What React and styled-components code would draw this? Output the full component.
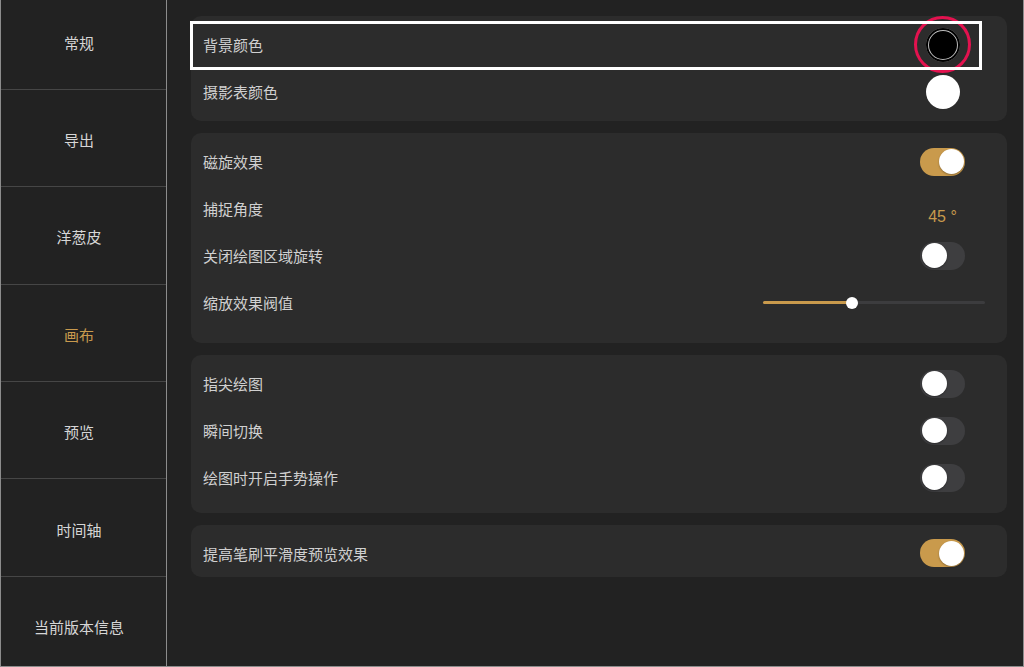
import React from "react"
import styled, { createGlobalStyle } from "styled-components"

const GlobalStyle = createGlobalStyle`
  html, body {
    margin: 0;
    padding: 0;
    background: #222222;
  }
  * {
    box-sizing: border-box;
  }
`

const Frame = styled.div`
  width: 1024px;
  height: 667px;
  display: flex;
  background: #222222;
  border-left: 1px solid #8c8c8c;
  border-right: 1px solid #8c8c8c;
  border-bottom: 1px solid #8c8c8c;
  overflow: hidden;
  font-family: "Noto Sans CJK SC", "Noto Sans", sans-serif;
`

const Sidebar = styled.div`
  width: 166px;
  flex-shrink: 0;
  border-right: 1px solid #8c8c8c;
  display: flex;
  flex-direction: column;
  margin-top: -7.5px;
`

const NavItem = styled.div`
  height: 97.4px;
  flex-shrink: 0;
  display: flex;
  align-items: center;
  justify-content: center;
  padding: 3px 9px 0 0;
  border-bottom: 1px solid #464646;
  font-size: 15px;
  color: ${(p) => (p.active ? "#c99a4e" : "#d6d6d6")};
`

const Content = styled.div`
  flex: 1;
  padding: 16px 16px 0 24px;
  display: flex;
  flex-direction: column;
  gap: 12px;
`

const Card = styled.div`
  position: relative;
  background: #2c2c2c;
  border-radius: 10px;
  padding: ${(p) => p.pt ?? 5}px 0 ${(p) => p.pb ?? 5}px 0;
`

const Row = styled.div`
  height: 47px;
  display: flex;
  align-items: center;
  justify-content: space-between;
  padding: 0 42px 0 12px;
`

const Label = styled.span`
  font-size: 15px;
  color: #d0d0d0;
  letter-spacing: 0;
`

const Slot = styled.div`
  position: relative;
  width: 45px;
  display: flex;
  justify-content: center;
  align-items: center;
`

const Swatch = styled.div`
  width: 34px;
  height: 34px;
  border-radius: 50%;
  background: ${(p) => p.color};
  box-shadow: ${(p) =>
    p.color === "#000" ? "inset 0 0 0 2px #000, inset 0 0 0 3px #bdbdbd" : "none"};
`

const Ring = styled.div`
  position: absolute;
  left: 50%;
  top: 50%;
  width: 57px;
  height: 57px;
  margin: -28.5px 0 0 -28.5px;
  border-radius: 50%;
  border: 3px solid #e3124f;
`

const Highlight = styled.div`
  position: absolute;
  left: -1px;
  top: 5px;
  width: 792px;
  height: 49px;
  border: 3px solid #ffffff;
  pointer-events: none;
`

const Track = styled.div`
  width: 45px;
  height: 28px;
  border-radius: 14px;
  background: ${(p) => (p.on ? "#c99a4c" : "#3e3e40")};
  padding: 1.5px;
  display: flex;
  justify-content: ${(p) => (p.on ? "flex-end" : "flex-start")};
`

const Knob = styled.div`
  width: 25px;
  height: 25px;
  border-radius: 50%;
  background: #ffffff;
  box-shadow: 0 1px 2px rgba(0, 0, 0, 0.3);
`

const Value = styled.span`
  margin-top: 17px;
  font-family: "Liberation Sans", "Noto Sans", sans-serif;
  font-size: 16px;
  color: #c99a4c;
  white-space: nowrap;
`

const SliderRow = styled(Row)`
  padding-right: 22px;
`

const Slider = styled.div`
  position: relative;
  width: 222px;
  height: 3px;
  border-radius: 2px;
  background: #3c3c3e;
`

const SliderFill = styled.div`
  height: 100%;
  border-radius: 2px;
  background: #c99a4c;
`

const SliderThumb = styled.div`
  position: absolute;
  top: 50%;
  width: 12px;
  height: 12px;
  margin: -6px 0 0 -6px;
  border-radius: 50%;
  background: #ffffff;
`

const Toggle = ({ on }) => (
  <Slot>
    <Track on={on ? 1 : 0}>
      <Knob />
    </Track>
  </Slot>
)

const navItems = ["常规", "导出", "洋葱皮", "画布", "预览", "时间轴", "当前版本信息"]

const App = () => {
  const sliderPos = 40

  return (
    <>
      <GlobalStyle />
      <Frame>
        <Sidebar>
          {navItems.map((n) => (
            <NavItem key={n} active={n === "画布" ? 1 : 0}>
              {n}
            </NavItem>
          ))}
        </Sidebar>
        <Content>
          <Card pb={6}>
            <Row>
              <Label>背景颜色</Label>
              <Slot>
                <Swatch color="#000" />
                <Ring />
              </Slot>
            </Row>
            <Row>
              <Label>摄影表颜色</Label>
              <Slot>
                <Swatch color="#fff" />
              </Slot>
            </Row>
            <Highlight />
          </Card>
          <Card pb={17}>
            <Row>
              <Label>磁旋效果</Label>
              <Toggle on />
            </Row>
            <Row>
              <Label>捕捉角度</Label>
              <Slot>
                <Value>45 °</Value>
              </Slot>
            </Row>
            <Row>
              <Label>关闭绘图区域旋转</Label>
              <Toggle />
            </Row>
            <SliderRow>
              <Label>缩放效果阀值</Label>
              <Slider>
                <SliderFill style={{ width: `${sliderPos}%` }} />
                <SliderThumb style={{ left: `${sliderPos}%` }} />
              </Slider>
            </SliderRow>
          </Card>
          <Card pb={12}>
            <Row>
              <Label>指尖绘图</Label>
              <Toggle />
            </Row>
            <Row>
              <Label>瞬间切换</Label>
              <Toggle />
            </Row>
            <Row>
              <Label>绘图时开启手势操作</Label>
              <Toggle />
            </Row>
          </Card>
          <Card pt={4.5} pb={0.5}>
            <Row>
              <Label>提高笔刷平滑度预览效果</Label>
              <Toggle on />
            </Row>
          </Card>
        </Content>
      </Frame>
    </>
  )
}

export default App
